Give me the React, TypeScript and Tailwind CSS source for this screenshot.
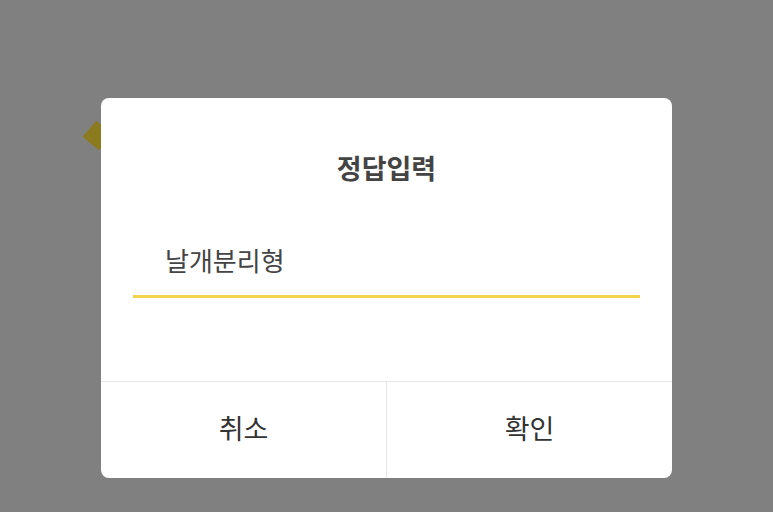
const App = () => {
    return (
        <div
            className="relative h-[512px] w-[773px] overflow-hidden bg-[#808080]"
            style={{ fontFamily: '"Noto Sans CJK KR", "Noto Sans", sans-serif' }}
        >
            {/* piece of the page behind the overlay */}
            <div className="absolute left-[87px] top-[125px] h-[21px] w-[21px] rotate-[40deg] bg-[#8c7a1f]" />

            <div className="relative flex justify-center pt-[98px]">
                <div className="flex h-[380px] w-[571px] flex-col rounded-[8px] bg-white">
                    <div className="flex h-[283px] flex-col px-[32px]">
                        <h2 className="mt-[52px] text-center text-[27px] font-bold leading-[36px] text-[#444]">
                            정답입력
                        </h2>
                        <div className="mt-[56px] border-b-[3px] border-[#f2d44a] pb-[17px] pl-[32px] text-[26px] leading-[36px] text-[#444]">
                            날개분리형
                        </div>
                    </div>
                    <div className="flex flex-1 border-t border-[#e6e6e6]">
                        <button className="flex-1 pb-[4px] text-[27px] text-[#333]">취소</button>
                        <button className="flex-1 border-l border-[#e6e6e6] pb-[4px] text-[27px] text-[#333]">
                            확인
                        </button>
                    </div>
                </div>
            </div>
        </div>
    );
};

export default App;
